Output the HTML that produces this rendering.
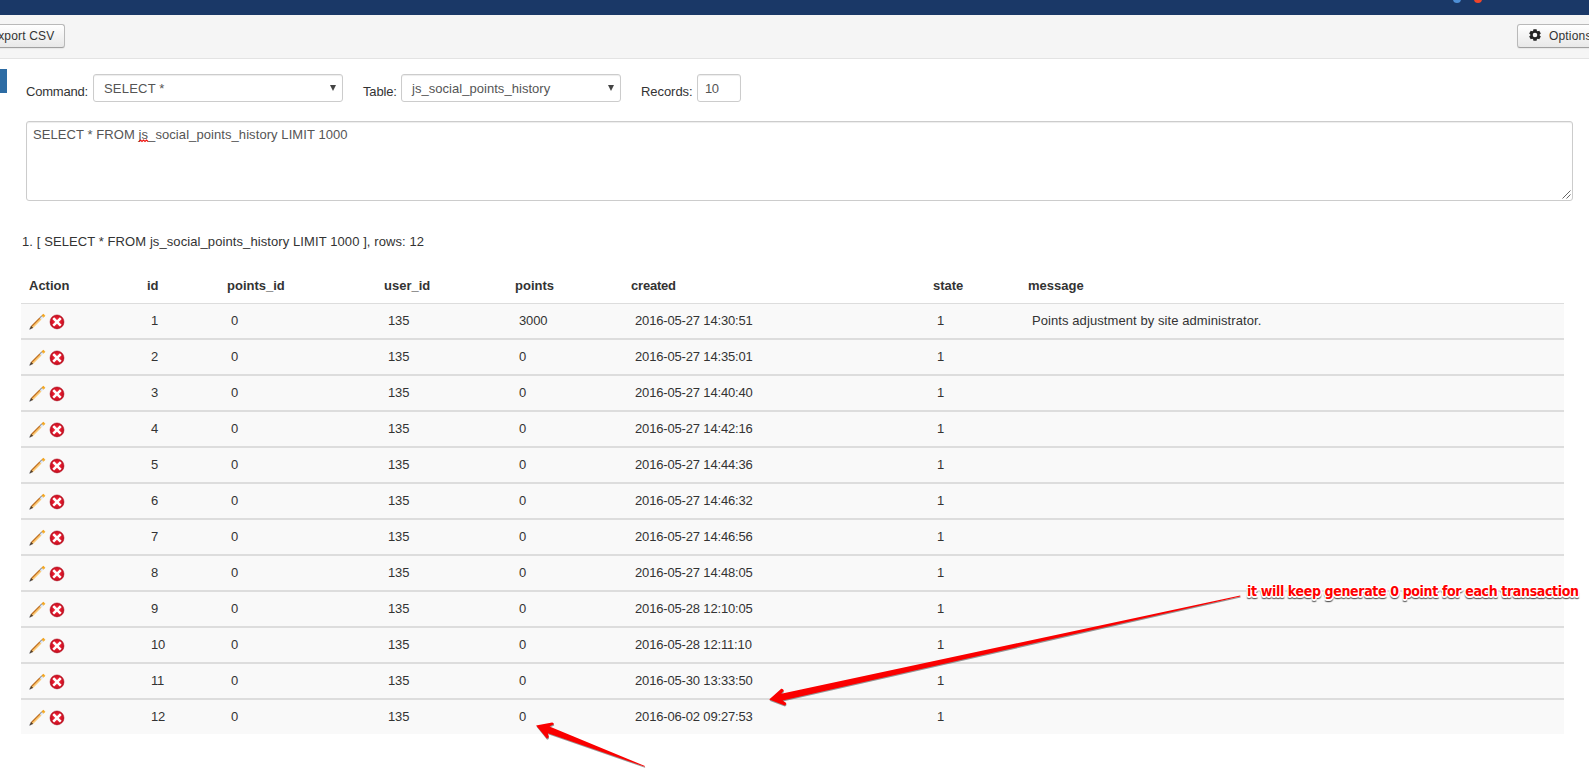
<!DOCTYPE html>
<html lang="en"><head><meta charset="utf-8"><title>SQL</title>
<style>
*{box-sizing:border-box}
html,body{margin:0;padding:0}
body{width:1589px;height:784px;overflow:hidden;background:#fff;font-family:"Liberation Sans",sans-serif;font-size:13px;line-height:18px;color:#333;position:relative}
.nav{position:absolute;left:0;top:0;width:1589px;height:15px;background:#1a3867;overflow:hidden}
.dot{position:absolute;border-radius:50%;width:8px;height:8px;top:-5.3px}
.toolbar{position:absolute;left:0;top:15px;width:1589px;height:44px;background:#f5f5f5;border-bottom:1px solid #e3e3e3}
.btn{position:absolute;top:24px;height:24px;border:1px solid #b9b9b9;border-bottom-color:#a0a0a0;border-radius:3px;background:linear-gradient(#ffffff,#e8e8e8);color:#333;font-size:12px;line-height:22px;white-space:nowrap;letter-spacing:.17px;box-shadow:0 1px 1px rgba(0,0,0,.06)}
.blue{position:absolute;left:0;top:69px;width:7px;height:24px;background:#2d6ca4}
.lbl{position:absolute;top:83px;font-size:13px;line-height:18px;color:#333;white-space:nowrap}
.sel,.inp{position:absolute;top:74px;height:28px;border:1px solid #ccc;border-radius:3px;background:#fff;color:#555;font-size:13px;line-height:27px;white-space:nowrap;box-shadow:inset 0 1px 1px rgba(0,0,0,.075)}
.sel .tri{position:absolute;right:6px;top:10px;width:0;height:0;border-left:3.5px solid transparent;border-right:3.5px solid transparent;border-top:6px solid #444}
.ta{position:absolute;left:26px;top:121px;width:1547px;height:80px;border:1px solid #ccc;border-radius:3px;background:#fff;color:#555;font-size:13px;line-height:18px;padding:4px 6px;letter-spacing:.075px;white-space:nowrap;box-shadow:inset 0 1px 1px rgba(0,0,0,.075)}
.ta .sq{position:relative;display:inline-block}
.ta .sq svg{position:absolute;left:0;top:13.4px}
.info{position:absolute;left:22px;top:233px;font-size:13px;line-height:18px;color:#333;white-space:nowrap;letter-spacing:.09px}
table{position:absolute;left:21px;top:267px;width:1543px;border-collapse:separate;border-spacing:0;table-layout:fixed}
th{font-weight:bold;text-align:left;padding:1px 8px 0;height:36px;vertical-align:middle;color:#333;white-space:nowrap}
td{padding:0 8px 1px 12px;height:36px;vertical-align:middle;background:#f9f9f9;border-top:2px solid #ddd;color:#333;white-space:nowrap;letter-spacing:-.16px}
tbody tr:first-child td{border-top:1px solid #ddd;height:35px}
td.act{padding:1px 0 0 8px;font-size:0;line-height:0}
td.dt{letter-spacing:-.16px}
td.msg{letter-spacing:.08px}
.ic{display:inline-block;vertical-align:middle}
.ic2{margin-left:4px}
.anno{position:absolute;left:1247px;top:580px;font-family:"DejaVu Sans Condensed","DejaVu Sans","Liberation Sans",sans-serif;font-stretch:condensed;font-weight:bold;font-size:14px;line-height:22px;color:#f00;white-space:nowrap;letter-spacing:-.35px;text-shadow:1px 0 0 #fff,-1px 0 0 #fff,0 1px 0 #fff,0 -1px 0 #fff,1px 1px 0 #fff,-1px -1px 0 #fff,1px -1px 0 #fff,-1px 1px 0 #fff,0 0 1.5px #fff,0 0 1.5px #fff,0 0 2px #fff,0 0 2px #fff,0 1.5px 1px #fff,0 1.5px 1px #fff,0 3.2px 1px rgba(0,0,0,.55),1px 3px 1px rgba(0,0,0,.4),-1px 3px 1px rgba(0,0,0,.4)}
svg.arrows{position:absolute;left:0;top:0;width:1589px;height:784px;pointer-events:none}
</style></head>
<body>

<div class="nav"><span class="dot" style="left:1453px;background:#4e8fd6"></span><span class="dot" style="left:1474px;background:#f0452a"></span></div>
<div class="toolbar"></div>
<div class="btn" style="left:-28px;width:93px;padding-left:17px">Export CSV</div>
<div class="btn" style="left:1517px;width:90px;padding-left:31px">Options<svg style="position:absolute;left:11.2px;top:4px" width="12" height="12" viewBox="0 0 12 12"><path fill="#222" fill-rule="evenodd" d="M4.09 1.71 L4.43 0.16 L7.57 0.16 L7.91 1.71 L8.76 2.20 L10.28 1.72 L11.84 4.43 L10.67 5.51 L10.67 6.49 L11.84 7.57 L10.28 10.28 L8.76 9.80 L7.91 10.29 L7.57 11.84 L4.43 11.84 L4.09 10.29 L3.24 9.80 L1.72 10.28 L0.16 7.57 L1.33 6.49 L1.33 5.51 L0.16 4.43 L1.72 1.72 L3.24 2.20Z M3.70 6.00 a2.30 2.30 0 1 0 4.60 0 a2.30 2.30 0 1 0 -4.60 0Z"/></svg></div>
<div class="blue"></div>
<div class="lbl" style="left:26px;letter-spacing:-.2px">Command:</div>
<div class="sel" style="left:93px;width:250px;padding-left:10px;letter-spacing:.2px">SELECT *<span class="tri"></span></div>
<div class="lbl" style="left:363px;letter-spacing:-.17px">Table:</div>
<div class="sel" style="left:401px;width:220px;padding-left:10px;letter-spacing:.04px">js_social_points_history<span class="tri"></span></div>
<div class="lbl" style="left:641px;letter-spacing:-.06px">Records:</div>
<div class="inp" style="left:697px;width:44px;padding-left:7px;letter-spacing:-.4px">10</div>
<div class="ta">SELECT * FROM <span class="sq">js<svg width="10" height="4" viewBox="0 0 10 4"><path d="M0 2.5 L1.5 1 L3 2.5 L4.5 1 L6 2.5 L7.5 1 L9 2.5" stroke="#f0100c" stroke-width="1.1" fill="none"/></svg></span>_social_points_history LIMIT 1000<svg style="position:absolute;right:1px;bottom:1px" width="9" height="9" viewBox="0 0 9 9"><path d="M8.5 0.5L0.5 8.5M8.5 4.5L4.5 8.5" stroke="#666" stroke-width="1" fill="none"/></svg></div>
<div class="info">1. [ SELECT * FROM js_social_points_history LIMIT 1000 ], rows: 12</div>
<table>
<colgroup><col style="width:118px"><col style="width:80px"><col style="width:157px"><col style="width:131px"><col style="width:116px"><col style="width:302px"><col style="width:95px"><col style="width:544px"></colgroup>
<thead><tr><th>Action</th><th>id</th><th>points_id</th><th>user_id</th><th>points</th><th style="letter-spacing:-.2px">created</th><th>state</th><th>message</th></tr></thead>
<tbody>
<tr><td class="act"><svg class="ic" width="16" height="16" viewBox="0 0 16 16" style="overflow:visible"><g transform="translate(0.3,15.7) rotate(-45)"><path d="M0 0L2.3 -1.1L2.3 1.1Z" fill="#4a4a50"/><path d="M2.3 -1.1L4.2 -1.4L4.2 1.4L2.3 1.1Z" fill="#5b3d1c"/><rect x="4.2" y="-1.4" width="11.6" height="1.1" fill="#b45f0c"/><rect x="4.2" y="-0.3" width="11.6" height="0.7" fill="#ee9a2c"/><rect x="4.2" y="0.4" width="11.6" height="1.0" fill="#fbc466"/><rect x="15.8" y="-1.4" width="2.8" height="1.0" fill="#7d828d"/><rect x="15.8" y="-0.4" width="2.8" height="1.8" fill="#dde5f3"/><rect x="18.6" y="-1.4" width="2.6" height="2.8" fill="#f0a01c"/><rect x="18.6" y="0.2" width="2.6" height="1.2" fill="#f6b63e"/></g></svg><svg class="ic ic2" width="16" height="16" viewBox="0 0 16 16"><circle cx="8" cy="7.9" r="7" fill="#bd0f1f" stroke="#b00c1c" stroke-width="0.5"/><circle cx="8" cy="7.8" r="6.2" fill="#d01426"/><circle cx="8" cy="7.6" r="5.2" fill="#dd182b"/><circle cx="8" cy="7.4" r="4" fill="#e82234"/><path d="M5.1 5L10.9 10.8M10.9 5L5.1 10.8" stroke="#fff" stroke-width="2.5" stroke-linecap="square" fill="none"/></svg></td><td>1</td><td>0</td><td>135</td><td>3000</td><td class="dt">2016-05-27 14:30:51</td><td>1</td><td class="msg">Points adjustment by site administrator.</td></tr>
<tr><td class="act"><svg class="ic" width="16" height="16" viewBox="0 0 16 16" style="overflow:visible"><g transform="translate(0.3,15.7) rotate(-45)"><path d="M0 0L2.3 -1.1L2.3 1.1Z" fill="#4a4a50"/><path d="M2.3 -1.1L4.2 -1.4L4.2 1.4L2.3 1.1Z" fill="#5b3d1c"/><rect x="4.2" y="-1.4" width="11.6" height="1.1" fill="#b45f0c"/><rect x="4.2" y="-0.3" width="11.6" height="0.7" fill="#ee9a2c"/><rect x="4.2" y="0.4" width="11.6" height="1.0" fill="#fbc466"/><rect x="15.8" y="-1.4" width="2.8" height="1.0" fill="#7d828d"/><rect x="15.8" y="-0.4" width="2.8" height="1.8" fill="#dde5f3"/><rect x="18.6" y="-1.4" width="2.6" height="2.8" fill="#f0a01c"/><rect x="18.6" y="0.2" width="2.6" height="1.2" fill="#f6b63e"/></g></svg><svg class="ic ic2" width="16" height="16" viewBox="0 0 16 16"><circle cx="8" cy="7.9" r="7" fill="#bd0f1f" stroke="#b00c1c" stroke-width="0.5"/><circle cx="8" cy="7.8" r="6.2" fill="#d01426"/><circle cx="8" cy="7.6" r="5.2" fill="#dd182b"/><circle cx="8" cy="7.4" r="4" fill="#e82234"/><path d="M5.1 5L10.9 10.8M10.9 5L5.1 10.8" stroke="#fff" stroke-width="2.5" stroke-linecap="square" fill="none"/></svg></td><td>2</td><td>0</td><td>135</td><td>0</td><td class="dt">2016-05-27 14:35:01</td><td>1</td><td class="msg"></td></tr>
<tr><td class="act"><svg class="ic" width="16" height="16" viewBox="0 0 16 16" style="overflow:visible"><g transform="translate(0.3,15.7) rotate(-45)"><path d="M0 0L2.3 -1.1L2.3 1.1Z" fill="#4a4a50"/><path d="M2.3 -1.1L4.2 -1.4L4.2 1.4L2.3 1.1Z" fill="#5b3d1c"/><rect x="4.2" y="-1.4" width="11.6" height="1.1" fill="#b45f0c"/><rect x="4.2" y="-0.3" width="11.6" height="0.7" fill="#ee9a2c"/><rect x="4.2" y="0.4" width="11.6" height="1.0" fill="#fbc466"/><rect x="15.8" y="-1.4" width="2.8" height="1.0" fill="#7d828d"/><rect x="15.8" y="-0.4" width="2.8" height="1.8" fill="#dde5f3"/><rect x="18.6" y="-1.4" width="2.6" height="2.8" fill="#f0a01c"/><rect x="18.6" y="0.2" width="2.6" height="1.2" fill="#f6b63e"/></g></svg><svg class="ic ic2" width="16" height="16" viewBox="0 0 16 16"><circle cx="8" cy="7.9" r="7" fill="#bd0f1f" stroke="#b00c1c" stroke-width="0.5"/><circle cx="8" cy="7.8" r="6.2" fill="#d01426"/><circle cx="8" cy="7.6" r="5.2" fill="#dd182b"/><circle cx="8" cy="7.4" r="4" fill="#e82234"/><path d="M5.1 5L10.9 10.8M10.9 5L5.1 10.8" stroke="#fff" stroke-width="2.5" stroke-linecap="square" fill="none"/></svg></td><td>3</td><td>0</td><td>135</td><td>0</td><td class="dt">2016-05-27 14:40:40</td><td>1</td><td class="msg"></td></tr>
<tr><td class="act"><svg class="ic" width="16" height="16" viewBox="0 0 16 16" style="overflow:visible"><g transform="translate(0.3,15.7) rotate(-45)"><path d="M0 0L2.3 -1.1L2.3 1.1Z" fill="#4a4a50"/><path d="M2.3 -1.1L4.2 -1.4L4.2 1.4L2.3 1.1Z" fill="#5b3d1c"/><rect x="4.2" y="-1.4" width="11.6" height="1.1" fill="#b45f0c"/><rect x="4.2" y="-0.3" width="11.6" height="0.7" fill="#ee9a2c"/><rect x="4.2" y="0.4" width="11.6" height="1.0" fill="#fbc466"/><rect x="15.8" y="-1.4" width="2.8" height="1.0" fill="#7d828d"/><rect x="15.8" y="-0.4" width="2.8" height="1.8" fill="#dde5f3"/><rect x="18.6" y="-1.4" width="2.6" height="2.8" fill="#f0a01c"/><rect x="18.6" y="0.2" width="2.6" height="1.2" fill="#f6b63e"/></g></svg><svg class="ic ic2" width="16" height="16" viewBox="0 0 16 16"><circle cx="8" cy="7.9" r="7" fill="#bd0f1f" stroke="#b00c1c" stroke-width="0.5"/><circle cx="8" cy="7.8" r="6.2" fill="#d01426"/><circle cx="8" cy="7.6" r="5.2" fill="#dd182b"/><circle cx="8" cy="7.4" r="4" fill="#e82234"/><path d="M5.1 5L10.9 10.8M10.9 5L5.1 10.8" stroke="#fff" stroke-width="2.5" stroke-linecap="square" fill="none"/></svg></td><td>4</td><td>0</td><td>135</td><td>0</td><td class="dt">2016-05-27 14:42:16</td><td>1</td><td class="msg"></td></tr>
<tr><td class="act"><svg class="ic" width="16" height="16" viewBox="0 0 16 16" style="overflow:visible"><g transform="translate(0.3,15.7) rotate(-45)"><path d="M0 0L2.3 -1.1L2.3 1.1Z" fill="#4a4a50"/><path d="M2.3 -1.1L4.2 -1.4L4.2 1.4L2.3 1.1Z" fill="#5b3d1c"/><rect x="4.2" y="-1.4" width="11.6" height="1.1" fill="#b45f0c"/><rect x="4.2" y="-0.3" width="11.6" height="0.7" fill="#ee9a2c"/><rect x="4.2" y="0.4" width="11.6" height="1.0" fill="#fbc466"/><rect x="15.8" y="-1.4" width="2.8" height="1.0" fill="#7d828d"/><rect x="15.8" y="-0.4" width="2.8" height="1.8" fill="#dde5f3"/><rect x="18.6" y="-1.4" width="2.6" height="2.8" fill="#f0a01c"/><rect x="18.6" y="0.2" width="2.6" height="1.2" fill="#f6b63e"/></g></svg><svg class="ic ic2" width="16" height="16" viewBox="0 0 16 16"><circle cx="8" cy="7.9" r="7" fill="#bd0f1f" stroke="#b00c1c" stroke-width="0.5"/><circle cx="8" cy="7.8" r="6.2" fill="#d01426"/><circle cx="8" cy="7.6" r="5.2" fill="#dd182b"/><circle cx="8" cy="7.4" r="4" fill="#e82234"/><path d="M5.1 5L10.9 10.8M10.9 5L5.1 10.8" stroke="#fff" stroke-width="2.5" stroke-linecap="square" fill="none"/></svg></td><td>5</td><td>0</td><td>135</td><td>0</td><td class="dt">2016-05-27 14:44:36</td><td>1</td><td class="msg"></td></tr>
<tr><td class="act"><svg class="ic" width="16" height="16" viewBox="0 0 16 16" style="overflow:visible"><g transform="translate(0.3,15.7) rotate(-45)"><path d="M0 0L2.3 -1.1L2.3 1.1Z" fill="#4a4a50"/><path d="M2.3 -1.1L4.2 -1.4L4.2 1.4L2.3 1.1Z" fill="#5b3d1c"/><rect x="4.2" y="-1.4" width="11.6" height="1.1" fill="#b45f0c"/><rect x="4.2" y="-0.3" width="11.6" height="0.7" fill="#ee9a2c"/><rect x="4.2" y="0.4" width="11.6" height="1.0" fill="#fbc466"/><rect x="15.8" y="-1.4" width="2.8" height="1.0" fill="#7d828d"/><rect x="15.8" y="-0.4" width="2.8" height="1.8" fill="#dde5f3"/><rect x="18.6" y="-1.4" width="2.6" height="2.8" fill="#f0a01c"/><rect x="18.6" y="0.2" width="2.6" height="1.2" fill="#f6b63e"/></g></svg><svg class="ic ic2" width="16" height="16" viewBox="0 0 16 16"><circle cx="8" cy="7.9" r="7" fill="#bd0f1f" stroke="#b00c1c" stroke-width="0.5"/><circle cx="8" cy="7.8" r="6.2" fill="#d01426"/><circle cx="8" cy="7.6" r="5.2" fill="#dd182b"/><circle cx="8" cy="7.4" r="4" fill="#e82234"/><path d="M5.1 5L10.9 10.8M10.9 5L5.1 10.8" stroke="#fff" stroke-width="2.5" stroke-linecap="square" fill="none"/></svg></td><td>6</td><td>0</td><td>135</td><td>0</td><td class="dt">2016-05-27 14:46:32</td><td>1</td><td class="msg"></td></tr>
<tr><td class="act"><svg class="ic" width="16" height="16" viewBox="0 0 16 16" style="overflow:visible"><g transform="translate(0.3,15.7) rotate(-45)"><path d="M0 0L2.3 -1.1L2.3 1.1Z" fill="#4a4a50"/><path d="M2.3 -1.1L4.2 -1.4L4.2 1.4L2.3 1.1Z" fill="#5b3d1c"/><rect x="4.2" y="-1.4" width="11.6" height="1.1" fill="#b45f0c"/><rect x="4.2" y="-0.3" width="11.6" height="0.7" fill="#ee9a2c"/><rect x="4.2" y="0.4" width="11.6" height="1.0" fill="#fbc466"/><rect x="15.8" y="-1.4" width="2.8" height="1.0" fill="#7d828d"/><rect x="15.8" y="-0.4" width="2.8" height="1.8" fill="#dde5f3"/><rect x="18.6" y="-1.4" width="2.6" height="2.8" fill="#f0a01c"/><rect x="18.6" y="0.2" width="2.6" height="1.2" fill="#f6b63e"/></g></svg><svg class="ic ic2" width="16" height="16" viewBox="0 0 16 16"><circle cx="8" cy="7.9" r="7" fill="#bd0f1f" stroke="#b00c1c" stroke-width="0.5"/><circle cx="8" cy="7.8" r="6.2" fill="#d01426"/><circle cx="8" cy="7.6" r="5.2" fill="#dd182b"/><circle cx="8" cy="7.4" r="4" fill="#e82234"/><path d="M5.1 5L10.9 10.8M10.9 5L5.1 10.8" stroke="#fff" stroke-width="2.5" stroke-linecap="square" fill="none"/></svg></td><td>7</td><td>0</td><td>135</td><td>0</td><td class="dt">2016-05-27 14:46:56</td><td>1</td><td class="msg"></td></tr>
<tr><td class="act"><svg class="ic" width="16" height="16" viewBox="0 0 16 16" style="overflow:visible"><g transform="translate(0.3,15.7) rotate(-45)"><path d="M0 0L2.3 -1.1L2.3 1.1Z" fill="#4a4a50"/><path d="M2.3 -1.1L4.2 -1.4L4.2 1.4L2.3 1.1Z" fill="#5b3d1c"/><rect x="4.2" y="-1.4" width="11.6" height="1.1" fill="#b45f0c"/><rect x="4.2" y="-0.3" width="11.6" height="0.7" fill="#ee9a2c"/><rect x="4.2" y="0.4" width="11.6" height="1.0" fill="#fbc466"/><rect x="15.8" y="-1.4" width="2.8" height="1.0" fill="#7d828d"/><rect x="15.8" y="-0.4" width="2.8" height="1.8" fill="#dde5f3"/><rect x="18.6" y="-1.4" width="2.6" height="2.8" fill="#f0a01c"/><rect x="18.6" y="0.2" width="2.6" height="1.2" fill="#f6b63e"/></g></svg><svg class="ic ic2" width="16" height="16" viewBox="0 0 16 16"><circle cx="8" cy="7.9" r="7" fill="#bd0f1f" stroke="#b00c1c" stroke-width="0.5"/><circle cx="8" cy="7.8" r="6.2" fill="#d01426"/><circle cx="8" cy="7.6" r="5.2" fill="#dd182b"/><circle cx="8" cy="7.4" r="4" fill="#e82234"/><path d="M5.1 5L10.9 10.8M10.9 5L5.1 10.8" stroke="#fff" stroke-width="2.5" stroke-linecap="square" fill="none"/></svg></td><td>8</td><td>0</td><td>135</td><td>0</td><td class="dt">2016-05-27 14:48:05</td><td>1</td><td class="msg"></td></tr>
<tr><td class="act"><svg class="ic" width="16" height="16" viewBox="0 0 16 16" style="overflow:visible"><g transform="translate(0.3,15.7) rotate(-45)"><path d="M0 0L2.3 -1.1L2.3 1.1Z" fill="#4a4a50"/><path d="M2.3 -1.1L4.2 -1.4L4.2 1.4L2.3 1.1Z" fill="#5b3d1c"/><rect x="4.2" y="-1.4" width="11.6" height="1.1" fill="#b45f0c"/><rect x="4.2" y="-0.3" width="11.6" height="0.7" fill="#ee9a2c"/><rect x="4.2" y="0.4" width="11.6" height="1.0" fill="#fbc466"/><rect x="15.8" y="-1.4" width="2.8" height="1.0" fill="#7d828d"/><rect x="15.8" y="-0.4" width="2.8" height="1.8" fill="#dde5f3"/><rect x="18.6" y="-1.4" width="2.6" height="2.8" fill="#f0a01c"/><rect x="18.6" y="0.2" width="2.6" height="1.2" fill="#f6b63e"/></g></svg><svg class="ic ic2" width="16" height="16" viewBox="0 0 16 16"><circle cx="8" cy="7.9" r="7" fill="#bd0f1f" stroke="#b00c1c" stroke-width="0.5"/><circle cx="8" cy="7.8" r="6.2" fill="#d01426"/><circle cx="8" cy="7.6" r="5.2" fill="#dd182b"/><circle cx="8" cy="7.4" r="4" fill="#e82234"/><path d="M5.1 5L10.9 10.8M10.9 5L5.1 10.8" stroke="#fff" stroke-width="2.5" stroke-linecap="square" fill="none"/></svg></td><td>9</td><td>0</td><td>135</td><td>0</td><td class="dt">2016-05-28 12:10:05</td><td>1</td><td class="msg"></td></tr>
<tr><td class="act"><svg class="ic" width="16" height="16" viewBox="0 0 16 16" style="overflow:visible"><g transform="translate(0.3,15.7) rotate(-45)"><path d="M0 0L2.3 -1.1L2.3 1.1Z" fill="#4a4a50"/><path d="M2.3 -1.1L4.2 -1.4L4.2 1.4L2.3 1.1Z" fill="#5b3d1c"/><rect x="4.2" y="-1.4" width="11.6" height="1.1" fill="#b45f0c"/><rect x="4.2" y="-0.3" width="11.6" height="0.7" fill="#ee9a2c"/><rect x="4.2" y="0.4" width="11.6" height="1.0" fill="#fbc466"/><rect x="15.8" y="-1.4" width="2.8" height="1.0" fill="#7d828d"/><rect x="15.8" y="-0.4" width="2.8" height="1.8" fill="#dde5f3"/><rect x="18.6" y="-1.4" width="2.6" height="2.8" fill="#f0a01c"/><rect x="18.6" y="0.2" width="2.6" height="1.2" fill="#f6b63e"/></g></svg><svg class="ic ic2" width="16" height="16" viewBox="0 0 16 16"><circle cx="8" cy="7.9" r="7" fill="#bd0f1f" stroke="#b00c1c" stroke-width="0.5"/><circle cx="8" cy="7.8" r="6.2" fill="#d01426"/><circle cx="8" cy="7.6" r="5.2" fill="#dd182b"/><circle cx="8" cy="7.4" r="4" fill="#e82234"/><path d="M5.1 5L10.9 10.8M10.9 5L5.1 10.8" stroke="#fff" stroke-width="2.5" stroke-linecap="square" fill="none"/></svg></td><td>10</td><td>0</td><td>135</td><td>0</td><td class="dt">2016-05-28 12:11:10</td><td>1</td><td class="msg"></td></tr>
<tr><td class="act"><svg class="ic" width="16" height="16" viewBox="0 0 16 16" style="overflow:visible"><g transform="translate(0.3,15.7) rotate(-45)"><path d="M0 0L2.3 -1.1L2.3 1.1Z" fill="#4a4a50"/><path d="M2.3 -1.1L4.2 -1.4L4.2 1.4L2.3 1.1Z" fill="#5b3d1c"/><rect x="4.2" y="-1.4" width="11.6" height="1.1" fill="#b45f0c"/><rect x="4.2" y="-0.3" width="11.6" height="0.7" fill="#ee9a2c"/><rect x="4.2" y="0.4" width="11.6" height="1.0" fill="#fbc466"/><rect x="15.8" y="-1.4" width="2.8" height="1.0" fill="#7d828d"/><rect x="15.8" y="-0.4" width="2.8" height="1.8" fill="#dde5f3"/><rect x="18.6" y="-1.4" width="2.6" height="2.8" fill="#f0a01c"/><rect x="18.6" y="0.2" width="2.6" height="1.2" fill="#f6b63e"/></g></svg><svg class="ic ic2" width="16" height="16" viewBox="0 0 16 16"><circle cx="8" cy="7.9" r="7" fill="#bd0f1f" stroke="#b00c1c" stroke-width="0.5"/><circle cx="8" cy="7.8" r="6.2" fill="#d01426"/><circle cx="8" cy="7.6" r="5.2" fill="#dd182b"/><circle cx="8" cy="7.4" r="4" fill="#e82234"/><path d="M5.1 5L10.9 10.8M10.9 5L5.1 10.8" stroke="#fff" stroke-width="2.5" stroke-linecap="square" fill="none"/></svg></td><td>11</td><td>0</td><td>135</td><td>0</td><td class="dt">2016-05-30 13:33:50</td><td>1</td><td class="msg"></td></tr>
<tr><td class="act"><svg class="ic" width="16" height="16" viewBox="0 0 16 16" style="overflow:visible"><g transform="translate(0.3,15.7) rotate(-45)"><path d="M0 0L2.3 -1.1L2.3 1.1Z" fill="#4a4a50"/><path d="M2.3 -1.1L4.2 -1.4L4.2 1.4L2.3 1.1Z" fill="#5b3d1c"/><rect x="4.2" y="-1.4" width="11.6" height="1.1" fill="#b45f0c"/><rect x="4.2" y="-0.3" width="11.6" height="0.7" fill="#ee9a2c"/><rect x="4.2" y="0.4" width="11.6" height="1.0" fill="#fbc466"/><rect x="15.8" y="-1.4" width="2.8" height="1.0" fill="#7d828d"/><rect x="15.8" y="-0.4" width="2.8" height="1.8" fill="#dde5f3"/><rect x="18.6" y="-1.4" width="2.6" height="2.8" fill="#f0a01c"/><rect x="18.6" y="0.2" width="2.6" height="1.2" fill="#f6b63e"/></g></svg><svg class="ic ic2" width="16" height="16" viewBox="0 0 16 16"><circle cx="8" cy="7.9" r="7" fill="#bd0f1f" stroke="#b00c1c" stroke-width="0.5"/><circle cx="8" cy="7.8" r="6.2" fill="#d01426"/><circle cx="8" cy="7.6" r="5.2" fill="#dd182b"/><circle cx="8" cy="7.4" r="4" fill="#e82234"/><path d="M5.1 5L10.9 10.8M10.9 5L5.1 10.8" stroke="#fff" stroke-width="2.5" stroke-linecap="square" fill="none"/></svg></td><td>12</td><td>0</td><td>135</td><td>0</td><td class="dt">2016-06-02 09:27:53</td><td>1</td><td class="msg"></td></tr>
</tbody></table>
<svg class="arrows" viewBox="0 0 1589 784">
<g opacity=".55" fill="#444" transform="translate(0.3,1.1)" style="filter:blur(.6px)">
<path d="M769.2 699.6 L781.2 688.8 Q783.2 688.6 783.8 690.6 L781.2 693.8 L1240.2 595.4 L1240.3 596.4 L782.6 700.4 L786.2 703.1 Q786.4 705.2 784.6 705.4 Z"/>
<path d="M536.1 725.4 L552.1 722.5 Q554 722.6 553.8 724.3 L549.5 726.5 L644.9 766.0 L644.7 766.7 L547.8 733.2 L548.8 736.8 Q548.4 738.6 546.8 738.6 Z"/>
</g>
<g fill="#fa0000">
<path d="M769.2 699.6 L781.2 688.8 Q783.2 688.6 783.8 690.6 L781.2 693.8 L1240.2 595.4 L1240.3 596.4 L782.6 700.4 L786.2 703.1 Q786.4 705.2 784.6 705.4 Z"/>
<path d="M536.1 725.4 L552.1 722.5 Q554 722.6 553.8 724.3 L549.5 726.5 L644.9 766.0 L644.7 766.7 L547.8 733.2 L548.8 736.8 Q548.4 738.6 546.8 738.6 Z"/>
</g>
</svg>
<div class="anno">it will keep generate 0 point for each transaction</div>
</body></html>
